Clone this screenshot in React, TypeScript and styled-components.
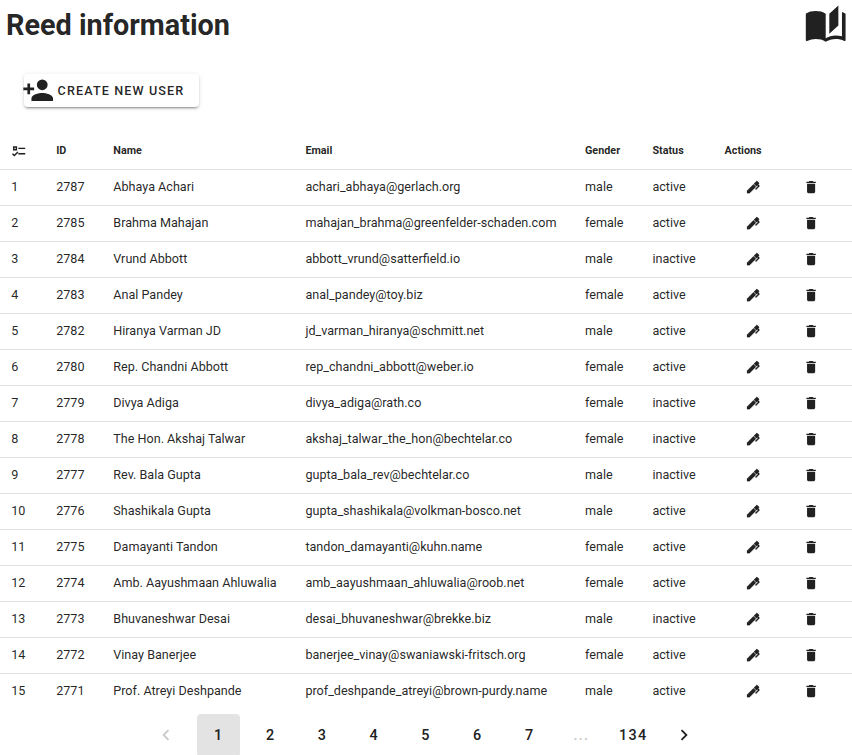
import React from 'react';
import styled, { createGlobalStyle } from 'styled-components';

const GlobalStyle = createGlobalStyle`
  *, *::before, *::after { box-sizing: border-box; }
  html { overflow: hidden; }
  body {
    margin: 0;
    background: #fff;
    color: rgba(0, 0, 0, 0.87);
    font-family: Roboto, "Liberation Sans", sans-serif;
    text-rendering: optimizeLegibility;
  }
`;

const icons = {
  book: 'M19 2L14 6.5V17.5L19 13V2M6.5 5C4.55 5 2.45 5.4 1 6.5V21.16C1 21.41 1.25 21.66 1.5 21.66C1.6 21.66 1.65 21.59 1.75 21.59C3.1 20.94 5.05 20.5 6.5 20.5C8.45 20.5 10.55 20.9 12 22C13.35 21.15 15.8 20.5 17.5 20.5C19.15 20.5 20.85 20.81 22.25 21.56C22.35 21.61 22.4 21.59 22.5 21.59C22.75 21.59 23 21.34 23 21.09V6.5C22.4 6.05 21.75 5.75 21 5.5V19C19.9 18.65 18.7 18.5 17.5 18.5C15.8 18.5 13.35 19.15 12 20V6.5C10.55 5.4 8.45 5 6.5 5Z',
  accountPlus: 'M15,14C12.33,14 7,15.33 7,18V20H23V18C23,15.33 17.67,14 15,14M6,10V7H4V10H1V12H4V15H6V12H9V10M15,12A4,4 0 0,0 19,8A4,4 0 0,0 15,4A4,4 0 0,0 11,8A4,4 0 0,0 15,12Z',
  checks: 'M3,5H9V11H3V5M5,7V9H7V7H5M11,7H21V9H11V7M11,15H21V17H11V15M5,20L1.5,16.5L2.91,15.09L5,17.17L9.59,12.59L11,14L5,20Z',
  pen: 'M20.71,7.04C20.37,7.38 20.04,7.71 20.03,8.04C20,8.36 20.34,8.69 20.66,9C21.14,9.5 21.61,9.95 21.59,10.44C21.57,10.93 21.06,11.44 20.55,11.94L16.42,16.08L15,14.66L19.25,10.42L18.29,9.46L16.87,10.87L13.12,7.12L16.96,3.29C17.35,2.9 18,2.9 18.37,3.29L20.71,5.63C21.1,6 21.1,6.65 20.71,7.04M3,17.25L12.56,7.68L16.31,11.43L6.75,21H3V17.25Z',
  trash: 'M19,4H15.5L14.5,3H9.5L8.5,4H5V6H19M6,19A2,2 0 0,0 8,21H16A2,2 0 0,0 18,19V7H6V19Z',
  left: 'M15.41,16.58L10.83,12L15.41,7.41L14,6L8,12L14,18L15.41,16.58Z',
  right: 'M8.59,16.58L13.17,12L8.59,7.41L10,6L16,12L10,18L8.59,16.58Z',
};

const Svg = styled.svg<{ $size: number; $weight: number }>`
  display: block;
  flex: none;
  width: ${(p) => p.$size}px;
  height: ${(p) => p.$size}px;
  fill: currentColor;
  stroke: currentColor;
  stroke-width: ${(p) => p.$weight};
`;

interface IconProps {
  name: keyof typeof icons;
  size: number;
  weight?: number;
}

const Icon = ({ name, size, weight = 0 }: IconProps) => (
  <Svg $size={size} $weight={weight} viewBox="0 0 24 24" aria-hidden="true">
    <path d={icons[name]} />
  </Svg>
);

const Page = styled.main`
  height: 755px;
  overflow: hidden;
`;

const Header = styled.header`
  display: flex;
  justify-content: space-between;
  height: 74px;
  padding: 2px 5px 0 6px;
`;

const Title = styled.h1`
  margin: 0;
  font-size: 28.8px;
  line-height: 46px;
  font-weight: 700;
`;

const CreateButton = styled.button`
  display: flex;
  align-items: center;
  width: 175px;
  height: 33px;
  margin: 0 0 0 24px;
  padding: 0;
  border: 0;
  border-radius: 4px;
  background: #fff;
  color: inherit;
  font: 500 12.6px/33px Roboto, "Liberation Sans", sans-serif;
  letter-spacing: 1.125px;
  text-transform: uppercase;
  white-space: nowrap;
  box-shadow: 0 3px 1px -2px rgba(0, 0, 0, 0.2), 0 2px 2px 0 rgba(0, 0, 0, 0.14),
    0 1px 5px 0 rgba(0, 0, 0, 0.12);

  svg { margin: -1px 3.2px 0 -2px; }
`;

const Table = styled.table`
  width: 852px;
  margin-top: 25px;
  border-collapse: separate;
  border-spacing: 0;
  table-layout: fixed;
`;

const HeadCell = styled.th`
  height: 38px;
  padding: 0 0 0 11.5px;
  border-bottom: 1px solid #e0e0e0;
  font-size: 10.8px;
  font-weight: 700;
  text-align: left;
  white-space: nowrap;

  svg { margin: 1px 0 0 -0.2px; }
`;

const Cell = styled.td<{ $last?: boolean }>`
  height: 36px;
  padding: 0 0 2px 11.5px;
  border-bottom: 1px solid ${(p) => (p.$last ? 'transparent' : '#e0e0e0')};
  font-size: 12.6px;
  white-space: nowrap;

  &:first-child { padding-left: 11.2px; }
`;

const ActionCell = styled(Cell)`
  padding-bottom: 0;
`;

const ActionButton = styled.button`
  display: flex;
  justify-content: center;
  width: 58px;
  padding: 0;
  border: 0;
  background: none;
  color: inherit;
`;

const Pagination = styled.nav`
  display: flex;
  justify-content: center;
  gap: 8.8px;
  margin-top: 4px;
`;

const PageButton = styled.button<{ $active?: boolean; $muted?: boolean }>`
  display: flex;
  align-items: center;
  justify-content: center;
  width: 43px;
  height: 43px;
  padding: 0;
  border: 0;
  border-radius: 4px;
  background: ${(p) => (p.$active ? '#e3e3e3' : 'transparent')};
  color: ${(p) => (p.$muted ? '#c8c8c8' : '#212121')};
  font: 500 14.4px/43px Roboto, "Liberation Sans", sans-serif;
  letter-spacing: 1.25px;

  svg { margin: -2px 1.4px 0 0; }
`;

const users: [number, string, string, string, string][] = [
  [2787, 'Abhaya Achari', 'achari_abhaya@gerlach.org', 'male', 'active'],
  [2785, 'Brahma Mahajan', 'mahajan_brahma@greenfelder-schaden.com', 'female', 'active'],
  [2784, 'Vrund Abbott', 'abbott_vrund@satterfield.io', 'male', 'inactive'],
  [2783, 'Anal Pandey', 'anal_pandey@toy.biz', 'female', 'active'],
  [2782, 'Hiranya Varman JD', 'jd_varman_hiranya@schmitt.net', 'male', 'active'],
  [2780, 'Rep. Chandni Abbott', 'rep_chandni_abbott@weber.io', 'female', 'active'],
  [2779, 'Divya Adiga', 'divya_adiga@rath.co', 'female', 'inactive'],
  [2778, 'The Hon. Akshaj Talwar', 'akshaj_talwar_the_hon@bechtelar.co', 'female', 'inactive'],
  [2777, 'Rev. Bala Gupta', 'gupta_bala_rev@bechtelar.co', 'male', 'inactive'],
  [2776, 'Shashikala Gupta', 'gupta_shashikala@volkman-bosco.net', 'male', 'active'],
  [2775, 'Damayanti Tandon', 'tandon_damayanti@kuhn.name', 'female', 'active'],
  [2774, 'Amb. Aayushmaan Ahluwalia', 'amb_aayushmaan_ahluwalia@roob.net', 'female', 'active'],
  [2773, 'Bhuvaneshwar Desai', 'desai_bhuvaneshwar@brekke.biz', 'male', 'inactive'],
  [2772, 'Vinay Banerjee', 'banerjee_vinay@swaniawski-fritsch.org', 'female', 'active'],
  [2771, 'Prof. Atreyi Deshpande', 'prof_deshpande_atreyi@brown-purdy.name', 'male', 'active'],
];

const columnWidths = [44.7, 57.1, 192.1, 279.6, 67.4, 72.2, 57.5, 81.4];

export default function App() {
  return (
    <Page>
      <GlobalStyle />
      <Header>
        <Title>Reed information</Title>
        <Icon name="book" size={43.4} />
      </Header>
      <CreateButton>
        <Icon name="accountPlus" size={32.4} />
        Create new user
      </CreateButton>
      <Table>
        <colgroup>
          {columnWidths.map((w, i) => (
            <col key={i} style={{ width: w }} />
          ))}
        </colgroup>
        <thead>
          <tr>
            <HeadCell><Icon name="checks" size={16.2} weight={0.1} /></HeadCell>
            <HeadCell>ID</HeadCell>
            <HeadCell>Name</HeadCell>
            <HeadCell>Email</HeadCell>
            <HeadCell>Gender</HeadCell>
            <HeadCell>Status</HeadCell>
            <HeadCell>Actions</HeadCell>
            <HeadCell />
          </tr>
        </thead>
        <tbody>
          {users.map(([id, name, email, gender, status], i) => {
            const last = i === users.length - 1;
            return (
              <tr key={id}>
                <Cell $last={last}>{i + 1}</Cell>
                <Cell $last={last}>{id}</Cell>
                <Cell $last={last}>{name}</Cell>
                <Cell $last={last}>{email}</Cell>
                <Cell $last={last}>{gender}</Cell>
                <Cell $last={last}>{status}</Cell>
                <ActionCell $last={last}>
                  <ActionButton aria-label="Edit"><Icon name="pen" size={16.2} weight={0.3} /></ActionButton>
                </ActionCell>
                <ActionCell $last={last}>
                  <ActionButton aria-label="Delete"><Icon name="trash" size={16.2} /></ActionButton>
                </ActionCell>
              </tr>
            );
          })}
        </tbody>
      </Table>
      <Pagination>
        <PageButton $muted aria-label="Previous"><Icon name="left" size={22} /></PageButton>
        {[1, 2, 3, 4, 5, 6, 7].map((n) => (
          <PageButton key={n} $active={n === 1}>{n}</PageButton>
        ))}
        <PageButton $muted>...</PageButton>
        <PageButton>134</PageButton>
        <PageButton aria-label="Next"><Icon name="right" size={22} /></PageButton>
      </Pagination>
    </Page>
  );
}
